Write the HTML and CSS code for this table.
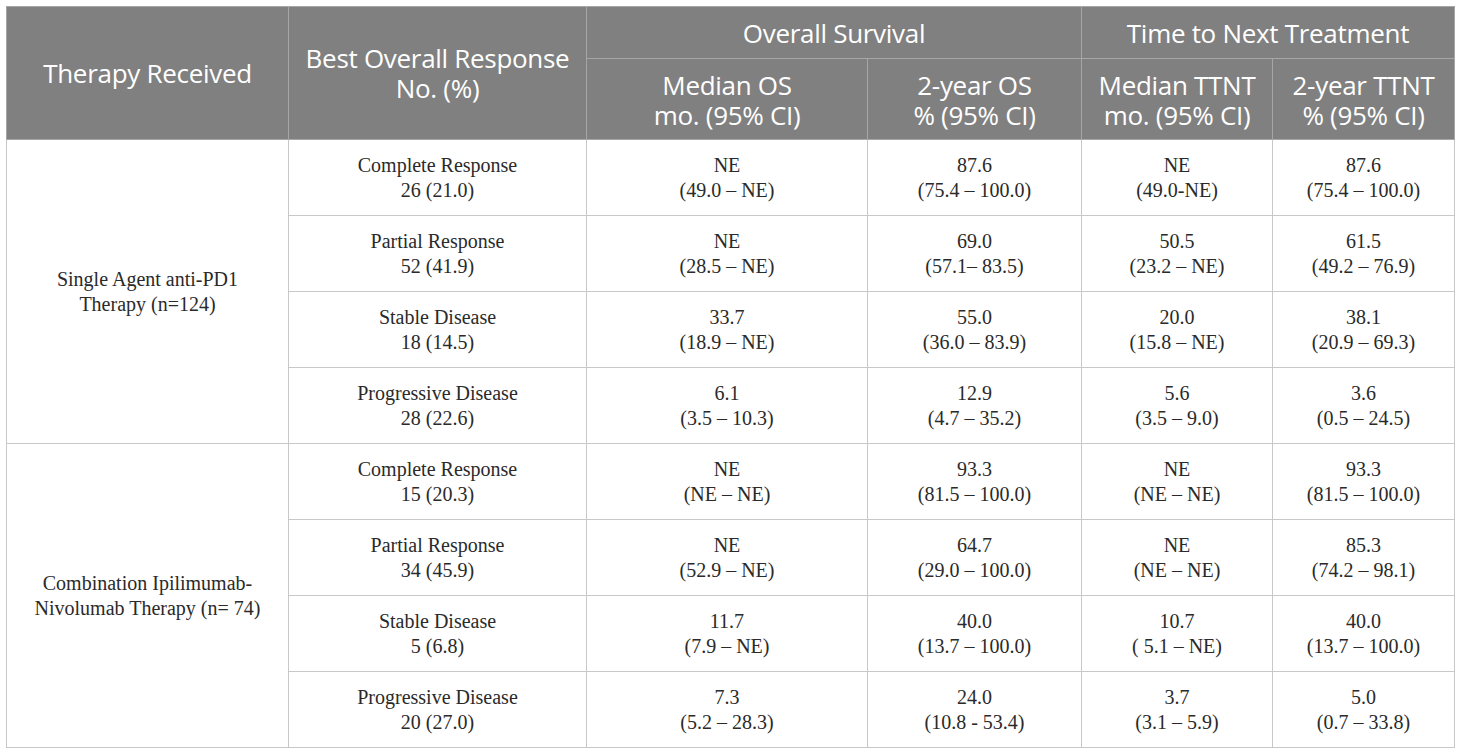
FILE: index.html
```html
<!DOCTYPE html>
<html>
  <head>
    <meta charset="UTF-8" />
    <title>Response and survival outcomes</title>
    <link rel="stylesheet" href="styles.css">
  </head>
  <body>
    <table class="outcomes">
      <colgroup>
        <col class="col-therapy" />
        <col class="col-response" />
        <col class="col-mos" />
        <col class="col-os2" />
        <col class="col-mttnt" />
        <col class="col-ttnt2" />
      </colgroup>
      <thead>
        <tr class="head-top">
          <th rowspan="2">Therapy Received</th>
          <th rowspan="2">Best Overall Response<br />No. (%)</th>
          <th colspan="2">Overall Survival</th>
          <th colspan="2">Time to Next Treatment</th>
        </tr>
        <tr class="head-sub">
          <th>Median OS<br />mo. (95% CI)</th>
          <th>2-year OS<br />% (95% CI)</th>
          <th>Median TTNT<br />mo. (95% CI)</th>
          <th>2-year TTNT<br />% (95% CI)</th>
        </tr>
      </thead>
      <tbody>
        <!-- Single agent anti-PD1 -->
        <tr>
          <td rowspan="4" class="therapy">Single Agent anti-PD1<br />Therapy (n=124)</td>
          <td>Complete Response<br />26 (21.0)</td>
          <td>NE<br />(49.0 – NE)</td>
          <td>87.6<br />(75.4 – 100.0)</td>
          <td>NE<br />(49.0-NE)</td>
          <td>87.6<br />(75.4 – 100.0)</td>
        </tr>
        <tr>
          <td>Partial Response<br />52 (41.9)</td>
          <td>NE<br />(28.5 – NE)</td>
          <td>69.0<br />(57.1– 83.5)</td>
          <td>50.5<br />(23.2 – NE)</td>
          <td>61.5<br />(49.2 – 76.9)</td>
        </tr>
        <tr>
          <td>Stable Disease<br />18 (14.5)</td>
          <td>33.7<br />(18.9 – NE)</td>
          <td>55.0<br />(36.0 – 83.9)</td>
          <td>20.0<br />(15.8 – NE)</td>
          <td>38.1<br />(20.9 – 69.3)</td>
        </tr>
        <tr>
          <td>Progressive Disease<br />28 (22.6)</td>
          <td>6.1<br />(3.5 – 10.3)</td>
          <td>12.9<br />(4.7 – 35.2)</td>
          <td>5.6<br />(3.5 – 9.0)</td>
          <td>3.6<br />(0.5 – 24.5)</td>
        </tr>

        <!-- Combination ipilimumab-nivolumab -->
        <tr>
          <td rowspan="4" class="therapy">Combination Ipilimumab-<br />Nivolumab Therapy (n= 74)</td>
          <td>Complete Response<br />15 (20.3)</td>
          <td>NE<br />(NE – NE)</td>
          <td>93.3<br />(81.5 – 100.0)</td>
          <td>NE<br />(NE – NE)</td>
          <td>93.3<br />(81.5 – 100.0)</td>
        </tr>
        <tr>
          <td>Partial Response<br />34 (45.9)</td>
          <td>NE<br />(52.9 – NE)</td>
          <td>64.7<br />(29.0 – 100.0)</td>
          <td>NE<br />(NE – NE)</td>
          <td>85.3<br />(74.2 – 98.1)</td>
        </tr>
        <tr>
          <td>Stable Disease<br />5 (6.8)</td>
          <td>11.7<br />(7.9 – NE)</td>
          <td>40.0<br />(13.7 – 100.0)</td>
          <td>10.7<br />( 5.1 – NE)</td>
          <td>40.0<br />(13.7 – 100.0)</td>
        </tr>
        <tr>
          <td>Progressive Disease<br />20 (27.0)</td>
          <td>7.3<br />(5.2 – 28.3)</td>
          <td>24.0<br />(10.8 - 53.4)</td>
          <td>3.7<br />(3.1 – 5.9)</td>
          <td>5.0<br />(0.7 – 33.8)</td>
        </tr>
      </tbody>
    </table>
  </body>
</html>
```

FILE: styles.css
```css
* {
  margin: 0;
  padding: 0;
  box-sizing: border-box;
}

body {
  background: #ffffff;
  padding: 6px;
}

.outcomes {
  width: 1448px;
  border-collapse: collapse;
  table-layout: fixed;
  border: 1px solid #c8c8c8;
}

.col-therapy { width: 282px; }
.col-response { width: 298px; }
.col-mos { width: 281px; }
.col-os2 { width: 214px; }
.col-mttnt { width: 191px; }
.col-ttnt2 { width: 182px; }

.outcomes th {
  background: #808080;
  color: #ffffff;
  font-family: "Open Sans", "Noto Sans", sans-serif;
  font-weight: 400;
  font-size: 26px;
  line-height: 30px;
  letter-spacing: -0.3px;
  text-align: center;
  vertical-align: middle;
  border: 1px solid #a6a6a6;
}

.head-top th {
  height: 52px;
}

.head-sub th {
  height: 81px;
  padding-top: 2px;
}

.outcomes td {
  font-family: "Liberation Serif", "Times New Roman", serif;
  font-size: 20px;
  line-height: 25px;
  color: #2a2a2a;
  text-align: center;
  vertical-align: middle;
  height: 76px;
  border: 1px solid #c8c8c8;
}
```
